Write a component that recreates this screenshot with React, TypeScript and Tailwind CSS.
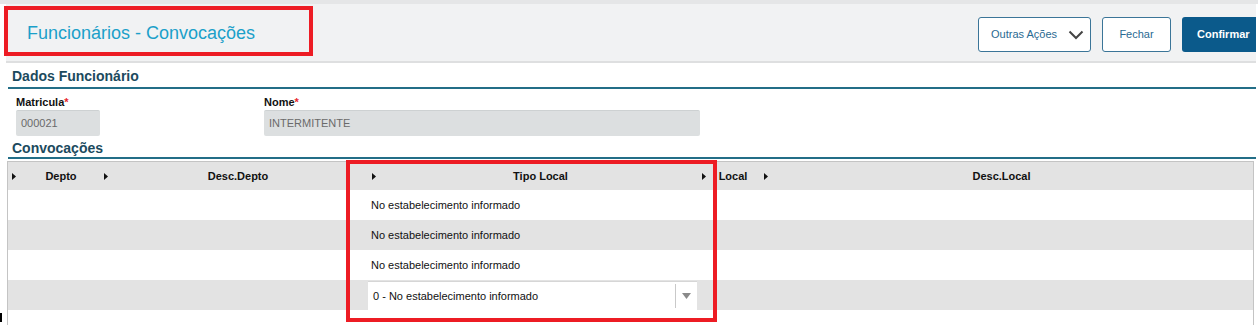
import React from 'react';

const columns = [
  { label: 'Depto', w: 'w-[92px] shrink-0', text: 'pl-[6px]' },
  { label: 'Desc.Depto', w: 'w-[268px] shrink-0', text: '' },
  { label: 'Tipo Local', w: 'w-[330px] shrink-0', text: 'pl-[7px]' },
  { label: 'Local', w: 'w-[62px] shrink-0', text: '' },
  { label: 'Desc.Local', w: 'flex-1 pr-[18px]', text: '' },
];

function SortArrow() {
  return (
    <svg width="4" height="7" viewBox="0 0 4 7" className="shrink-0">
      <path d="M0 0 L4 3.5 L0 7 Z" fill="#111" />
    </svg>
  );
}

function SectionTitle({ children, className }: { children: React.ReactNode; className: string }) {
  return (
    <div className={`flex items-end pl-[4px] border-b-2 border-[#236e87] text-[14px] leading-[16px] font-bold text-[#1c4a5e] ${className}`}>
      {children}
    </div>
  );
}

function Field({ label, value, width }: { label: string; value: string; width: string }) {
  return (
    <div className={width}>
      <div className="h-[13px] mb-[1px] text-[11px] leading-[13px] font-bold text-[#111]">
        {label}
        <span className="text-[#e8262c]">*</span>
      </div>
      <div className="h-[26px] rounded-[2px] bg-[#dcdfe0] border-t border-[#cdd1d2] flex items-center pl-[5px] text-[11px] text-[#6a6a6a]">
        {value}
      </div>
    </div>
  );
}

const tipoRows = [
  'No estabelecimento informado',
  'No estabelecimento informado',
  'No estabelecimento informado',
  null,
  '',
];

export default function App() {
  return (
    <div className="relative w-[1258px] h-[325px] overflow-hidden bg-white font-['Liberation_Sans',Arial,sans-serif]">
      <div className="h-[4px] bg-[#e5e6e7]" />

      {/* page header */}
      <div className="ml-[6px] mr-[2px] h-[59px] bg-[#f1f2f3] border-b-2 border-[#dedfe0] flex items-center overflow-hidden">
        <div className="pl-[21px] pt-[2px] text-[18px] text-[#1ba0c9] flex-1">Funcionários - Convocações</div>
        <div className="self-start pt-[13px] w-[278px] shrink-0 flex gap-[11px]">
          <button className="w-[113px] h-[35px] shrink-0 rounded-[3px] border border-[#3b7598] bg-white flex items-center pl-[12px] pr-[6px] text-[11px] text-[#2a6a92]">
            <span className="flex-1 text-left">Outras Ações</span>
            <svg width="16" height="10" viewBox="0 0 16 10">
              <polyline points="1.5,1.5 8,8 14.5,1.5" fill="none" stroke="#444" strokeWidth="2" />
            </svg>
          </button>
          <button className="w-[69px] h-[35px] shrink-0 rounded-[3px] border border-[#3b7598] bg-white text-[11px] text-[#2a6a92]">
            Fechar
          </button>
          <button className="w-[80px] h-[35px] shrink-0 rounded-[3px] bg-[#0b5a8b] text-[11px] font-bold text-white text-left pl-[15px]">
            Confirmar
          </button>
        </div>
      </div>

      <div className="pl-[8px] pr-[2px]">
        <SectionTitle className="h-[26px] pb-[3px]">Dados Funcionário</SectionTitle>

        <div className="flex gap-[164px] pl-[8px] pt-[7px]">
          <Field label="Matricula" value="000021" width="w-[84px]" />
          <Field label="Nome" value="INTERMITENTE" width="w-[436px]" />
        </div>

        <SectionTitle className="h-[23px] pb-[1px]">Convocações</SectionTitle>

        {/* grid */}
        <div className="mt-[2px] -ml-[1px] w-[1247px] border-l border-t border-r border-[#c4c4c4]">
          <div className="h-[28px] bg-[#e3e3e3] flex items-center text-[11px] font-bold text-[#111]">
            {columns.map((c) => (
              <div key={c.label} className={`${c.w} flex items-center pl-[4px]`}>
                <SortArrow />
                <span className={`flex-1 text-center ${c.text}`}>{c.label}</span>
              </div>
            ))}
          </div>
          {tipoRows.map((t, i) => (
            <div key={i} className={`h-[30px] flex text-[11px] text-[#111] ${i % 2 === 1 ? 'bg-[#e3e3e3]' : 'bg-white'}`}>
              <div className="w-[92px] shrink-0" />
              <div className="w-[268px] shrink-0" />
              <div className="w-[330px] shrink-0 flex items-center">
                {t === null ? (
                  <div className="w-[329px] h-[29px] mt-[1px] bg-white border-t border-[#d6d6d6] flex items-center">
                    <span className="flex-1 pl-[5px]">0 - No estabelecimento informado</span>
                    <div className="w-[22px] h-[24px] border-l border-[#c9c9c9] flex items-center justify-center">
                      <svg width="9" height="6" viewBox="0 0 9 6">
                        <path d="M0 0 L9 0 L4.5 6 Z" fill="#8a8a8a" />
                      </svg>
                    </div>
                  </div>
                ) : (
                  <span className="pl-[3px]">{t}</span>
                )}
              </div>
              <div className="w-[62px] shrink-0" />
              <div className="flex-1" />
            </div>
          ))}
        </div>
      </div>

      {/* annotation boxes */}
      <div className="absolute left-[4px] top-[6px] w-[309px] h-[50px] border-4 border-[#ed1c24]" />
      <div className="absolute left-[346px] top-[160px] w-[371px] h-[162px] border-4 border-[#ed1c24]" />
      <div className="absolute left-0 top-[313px] w-[2px] h-[9px] bg-black" />
    </div>
  );
}
